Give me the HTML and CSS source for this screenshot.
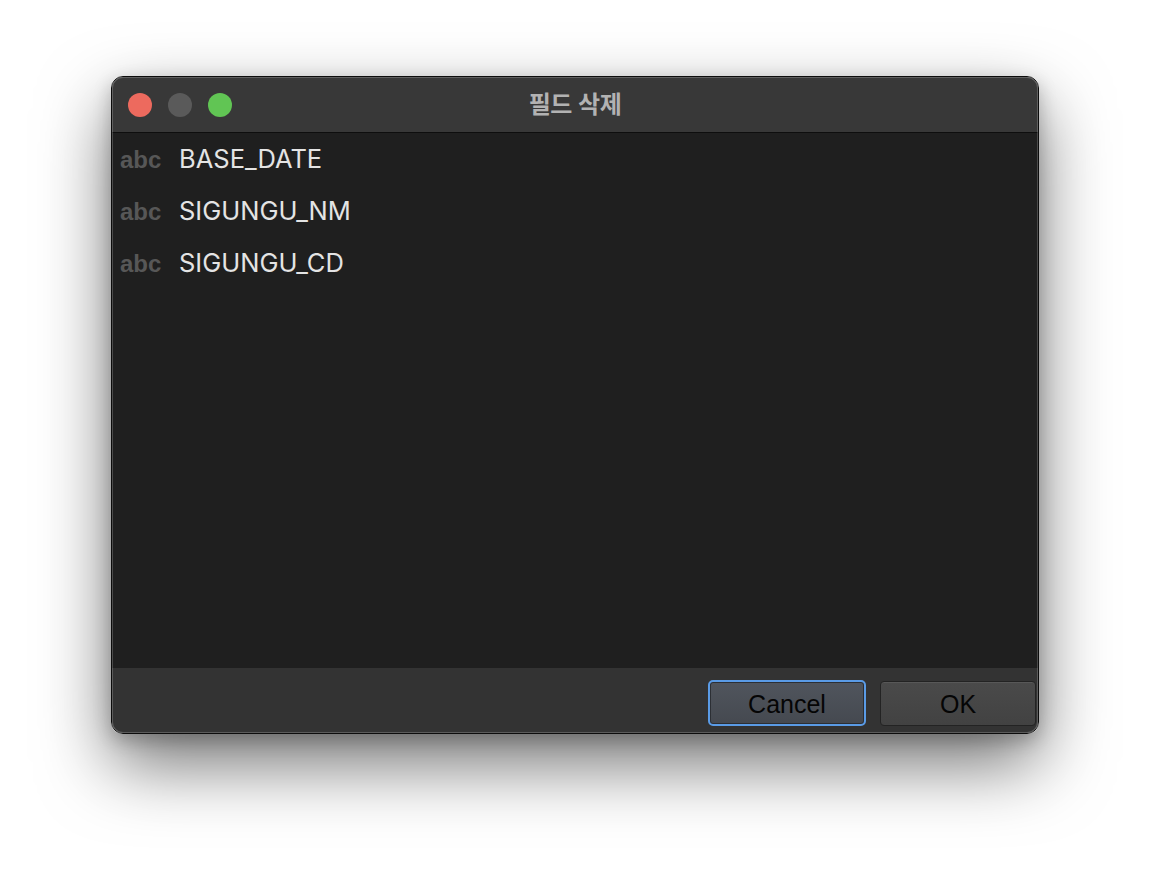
FILE: index.html
```html
<!DOCTYPE html>
<html lang="ko">
<head>
<meta charset="utf-8">
<title>필드 삭제</title>
<link rel="stylesheet" href="styles.css">
</head>
<body>
<div class="stage">
  <div class="window">
    <div class="titlebar">
      <div class="lights">
        <span class="light red"></span>
        <span class="light gray"></span>
        <span class="light green"></span>
      </div>
      <div class="title">필드 삭제</div>
      <div class="spacer"></div>
    </div>
    <div class="list">
      <div class="row"><span class="type">abc</span><span class="name">BASE_DATE</span></div>
      <div class="row"><span class="type">abc</span><span class="name">SIGUNGU_NM</span></div>
      <div class="row"><span class="type">abc</span><span class="name">SIGUNGU_CD</span></div>
    </div>
    <div class="footer">
      <button class="btn cancel">Cancel</button>
      <button class="btn ok">OK</button>
    </div>
    <div class="rim"></div>
  </div>
</div>
</body>
</html>
```
FILE: styles.css
```css
html, body {
  margin: 0;
  padding: 0;
  background: #ffffff;
}
body {
  font-family: "Liberation Sans", Arial, "Noto Sans CJK KR", sans-serif;
}
.stage {
  display: flex;
  justify-content: center;
  align-items: flex-start;
  padding-top: 76px;
  min-height: 882px;
  box-sizing: border-box;
}
.window {
  position: relative;
  box-sizing: border-box;
  width: 928px;
  height: 658px;
  border: 1px solid #0c0c0c;
  border-radius: 12px;
  overflow: hidden;
  display: flex;
  flex-direction: column;
  box-shadow: 0 30px 70px rgba(0, 0, 0, 0.55), 0 6px 18px rgba(0, 0, 0, 0.22);
}
.rim {
  position: absolute;
  inset: 0;
  border: 1px solid rgba(255, 255, 255, 0.2);
  border-radius: 11px;
  pointer-events: none;
}
.titlebar {
  height: 55px;
  flex: none;
  background: #383838;
  border-bottom: 1px solid #0e0e0e;
  display: grid;
  grid-template-columns: 1fr auto 1fr;
  align-items: center;
}
.lights {
  display: flex;
  gap: 16px;
  padding-left: 16px;
}
.light {
  width: 24px;
  height: 24px;
  border-radius: 50%;
}
.red { background: #ed6a5e; }
.gray { background: #5a5a5a; }
.green { background: #61c554; }
.title {
  font-family: "Noto Sans CJK KR", sans-serif;
  font-weight: 700;
  font-size: 24px;
  line-height: 30px;
  color: #b2b2b2;
  padding-bottom: 3px;
  letter-spacing: -0.5px;
}
.list {
  flex: 1;
  background: #1f1f1f;
}
.row {
  height: 52px;
  line-height: 51px;
  display: flex;
  align-items: baseline;
  padding-left: 8px;
  font-size: 24px;
}
.type {
  font-weight: 700;
  color: #575757;
  width: 59px;
}
.name {
  font-family: "Inter", "Liberation Sans", sans-serif;
  font-size: 25.5px;
  color: #e4e4e4;
}
.footer {
  height: 65px;
  flex: none;
  background: #333333;
  display: flex;
  justify-content: flex-end;
  align-items: flex-start;
  gap: 14px;
  padding-top: 12px;
  padding-right: 2px;
  box-sizing: border-box;
}
.btn {
  font-family: "Liberation Sans", Arial, sans-serif;
  font-size: 25px;
  color: #050505;
  box-sizing: border-box;
  padding: 0;
  margin: 0;
  cursor: default;
}
.cancel {
  width: 158px;
  height: 46px;
  border: 2px solid #5a9be6;
  border-radius: 5px;
  background: linear-gradient(#50555d, #454950);
  box-shadow: inset 0 0 0 1px #2c2f34;
  padding-top: 2px;
}
.ok {
  width: 156px;
  height: 45px;
  margin-top: 1px;
  border: 1px solid #232323;
  border-radius: 4px;
  background: linear-gradient(#4a4a4a, #424242);
  box-shadow: inset 0 1px 0 rgba(255, 255, 255, 0.08);
  padding-top: 2px;
}
```
